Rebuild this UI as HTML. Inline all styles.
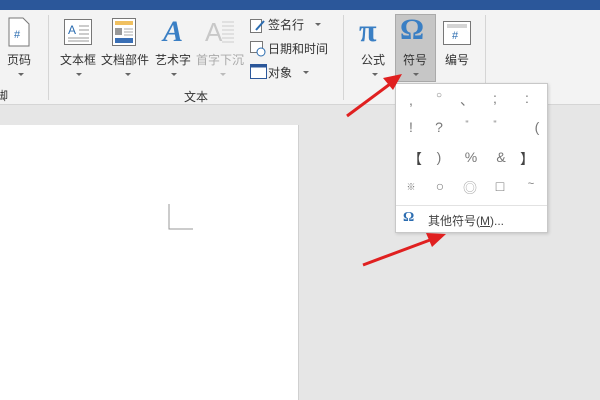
<!DOCTYPE html>
<html><head><meta charset="utf-8">
<style>
*{margin:0;padding:0;box-sizing:border-box}
body{width:600px;height:400px;overflow:hidden;position:relative;background:#e6e6e6;font-family:"Liberation Sans","Noto Sans CJK SC",sans-serif;font-size:12px;color:#333}
.abs{position:absolute}
.top{left:0;top:0;width:600px;height:10px;background:#2b579a}
.ribbon{left:0;top:10px;width:600px;height:95px;background:#f3f3f3;border-bottom:1px solid #d5d5d5}
.lbl{position:absolute;font-size:12px;color:#333;white-space:nowrap}
.arr{position:absolute;width:0;height:0;border-left:3px solid transparent;border-right:3px solid transparent;border-top:3px solid #666}
.sep{position:absolute;width:1px;background:#d5d5d5}
.page{left:0;top:125px;width:299px;height:275px;background:#fff;border-right:1px solid #d0d0d0}
.dd{left:395px;top:83px;width:153px;height:150px;background:#fff;border:1px solid #c8c8c8;box-shadow:1px 1px 3px rgba(0,0,0,.15)}
.s{position:absolute;color:#777;font-size:14px;width:30px;text-align:center}
</style></head><body>
<div class="abs top"></div>
<div class="abs ribbon">
  <!-- 页码 -->
  <svg class="abs" style="left:8px;top:7px" width="22" height="30"><path d="M1 1H15L21 7V29H1Z" fill="#fff" stroke="#777"/><text x="6" y="21" font-size="11" fill="#2b6cb0" font-family="Liberation Sans">#</text></svg>
  <div class="lbl" style="left:7px;top:41px">页码</div>
  <div class="arr" style="left:18px;top:63px"></div>
  <div class="lbl" style="left:-4px;top:77px">脚</div>
  <div class="sep" style="left:48px;top:5px;height:85px"></div>
  <!-- 文本框 -->
  <svg class="abs" style="left:64px;top:9px" width="28" height="26"><rect x="0.5" y="0.5" width="27" height="25" fill="#fff" stroke="#777"/><text x="4" y="15" font-size="12" fill="#2b6cb0" font-family="Liberation Sans">A</text><path d="M15 7H25M15 11H25M15 15H25M4 19H25M4 22H25" stroke="#999"/></svg>
  <div class="lbl" style="left:60px;top:41px">文本框</div>
  <div class="arr" style="left:76px;top:63px"></div>
  <!-- 文档部件 -->
  <svg class="abs" style="left:112px;top:8px" width="24" height="28"><rect x="0.5" y="0.5" width="23" height="27" fill="#fff" stroke="#777"/><rect x="3" y="3" width="18" height="4" fill="#f0c060"/><rect x="3" y="10" width="7" height="7" fill="#999"/><path d="M12 11H21M12 14H21M12 17H21" stroke="#aaa"/><rect x="3" y="20" width="18" height="5" fill="#3a6fb5"/></svg>
  <div class="lbl" style="left:101px;top:41px">文档部件</div>
  <div class="arr" style="left:125px;top:63px"></div>
  <!-- 艺术字 -->
  <div class="abs" style="left:163px;top:5px;font-size:30px;font-style:italic;font-weight:bold;color:#3a7fc4;font-family:'Liberation Serif',serif">A</div>
  <div class="lbl" style="left:155px;top:41px">艺术字</div>
  <div class="arr" style="left:171px;top:63px"></div>
  <!-- 首字下沉 -->
  <div class="abs" style="left:205px;top:7px;font-size:26px;color:#c8c8c8">A</div>
  <svg class="abs" style="left:222px;top:10px" width="12" height="26"><path d="M0 2H12M0 6H12M0 10H12M0 14H12M0 18H12M0 22H12" stroke="#ccc"/></svg>
  <div class="lbl" style="left:196px;top:41px;color:#aaa">首字下沉</div>
  <div class="arr" style="left:220px;top:63px;border-top-color:#bbb"></div>
  <!-- small buttons -->
  <svg class="abs" style="left:250px;top:8px" width="16" height="16"><rect x="0.5" y="1.5" width="11" height="13" fill="#fff" stroke="#777"/><path d="M6 12L14 3" stroke="#2b6cb0" stroke-width="2"/></svg>
  <div class="lbl" style="left:268px;top:6px">签名行</div>
  <div class="arr" style="left:315px;top:13px"></div>
  <svg class="abs" style="left:250px;top:31px" width="16" height="16"><rect x="0.5" y="0.5" width="12" height="11" fill="#fff" stroke="#777"/><circle cx="11" cy="11" r="4" fill="#fff" stroke="#2b6cb0"/></svg>
  <div class="lbl" style="left:268px;top:30px">日期和时间</div>
  <svg class="abs" style="left:250px;top:54px" width="17" height="15"><rect x="0.5" y="0.5" width="16" height="14" fill="#fff" stroke="#2b579a"/><rect x="0.5" y="0.5" width="16" height="3" fill="#2b579a"/></svg>
  <div class="lbl" style="left:268px;top:54px">对象</div>
  <div class="arr" style="left:303px;top:61px"></div>
  <div class="lbl" style="left:184px;top:78px">文本</div>
  <div class="sep" style="left:343px;top:5px;height:85px"></div>
  <!-- 公式 -->
  <div class="abs" style="left:359px;top:2px;font-size:32px;font-weight:bold;color:#3a7fc4;font-family:'Liberation Serif',serif">π</div>
  <div class="lbl" style="left:361px;top:41px">公式</div>
  <div class="arr" style="left:372px;top:63px"></div>
  <!-- 符号 highlighted -->
  <div class="abs" style="left:395px;top:4px;width:41px;height:68px;background:#c6c6c6;border:1px solid #aaa"></div>
  <div class="abs" style="left:400px;top:3px;font-size:30px;font-weight:bold;color:#3a7fc4;font-family:'Liberation Serif',serif">Ω</div>
  <div class="lbl" style="left:403px;top:41px">符号</div>
  <div class="arr" style="left:413px;top:63px"></div>
  <!-- 编号 -->
  <svg class="abs" style="left:443px;top:11px" width="28" height="24"><rect x="0.5" y="0.5" width="27" height="23" fill="#fff" stroke="#777"/><path d="M4 4H24M4 6H24" stroke="#aaa"/><text x="9" y="18" font-size="11" fill="#2b6cb0" font-family="Liberation Sans">#</text></svg>
  <div class="lbl" style="left:445px;top:41px">编号</div>
  <div class="sep" style="left:485px;top:5px;height:85px"></div>
</div>
<div class="abs page"></div>
<svg class="abs" style="left:168px;top:204px" width="26" height="27"><path d="M1 0V25H25" fill="none" stroke="#999"/></svg>
<div class="abs dd">
  <div class="s" style="left:0;top:8px">,</div><div class="s" style="left:28px;top:6px;font-size:10px">○</div><div class="s" style="left:56px;top:6px">、</div><div class="s" style="left:84px;top:6px">;</div><div class="s" style="left:116px;top:6px">:</div>
  <div class="s" style="left:0;top:35px">!</div><div class="s" style="left:28px;top:35px">?</div><div class="s" style="left:56px;top:35px;font-size:9px">"</div><div class="s" style="left:84px;top:35px;font-size:9px">"</div><div class="s" style="left:126px;top:35px">(</div>
  <div class="s" style="left:4px;top:65px;color:#444">【</div><div class="s" style="left:28px;top:65px">)</div><div class="s" style="left:60px;top:65px">%</div><div class="s" style="left:90px;top:65px">&amp;</div><div class="s" style="left:116px;top:65px;color:#444">】</div>
  <div class="s" style="left:0;top:96px;font-size:9px">※</div><div class="s" style="left:29px;top:94px">○</div><div class="s" style="left:59px;top:94px;color:#aaa">◎</div><div class="s" style="left:89px;top:94px">□</div><div class="s" style="left:120px;top:94px;font-size:11px">~</div>
  <div class="abs" style="left:0;top:121px;width:151px;height:1px;background:#e2e2e2"></div>
  <div class="abs" style="left:7px;top:126px;font-size:14px;font-weight:bold;color:#2b6cb0;font-family:'Liberation Serif',serif">Ω</div>
  <div class="abs" style="left:32px;top:128px;font-size:12px;color:#444">其他符号(<u>M</u>)...</div>
</div>
<svg class="abs" style="left:0;top:0" width="600" height="400">
  <g stroke="#e02020" stroke-width="3" fill="#e02020">
    <line x1="347" y1="116" x2="390" y2="84"/>
    <polygon points="402,74 383,78 393,90" stroke="none"/>
    <line x1="363" y1="265" x2="430" y2="240"/>
    <polygon points="446,234 426,233 432,247" stroke="none"/>
  </g>
</svg>
</body></html>
